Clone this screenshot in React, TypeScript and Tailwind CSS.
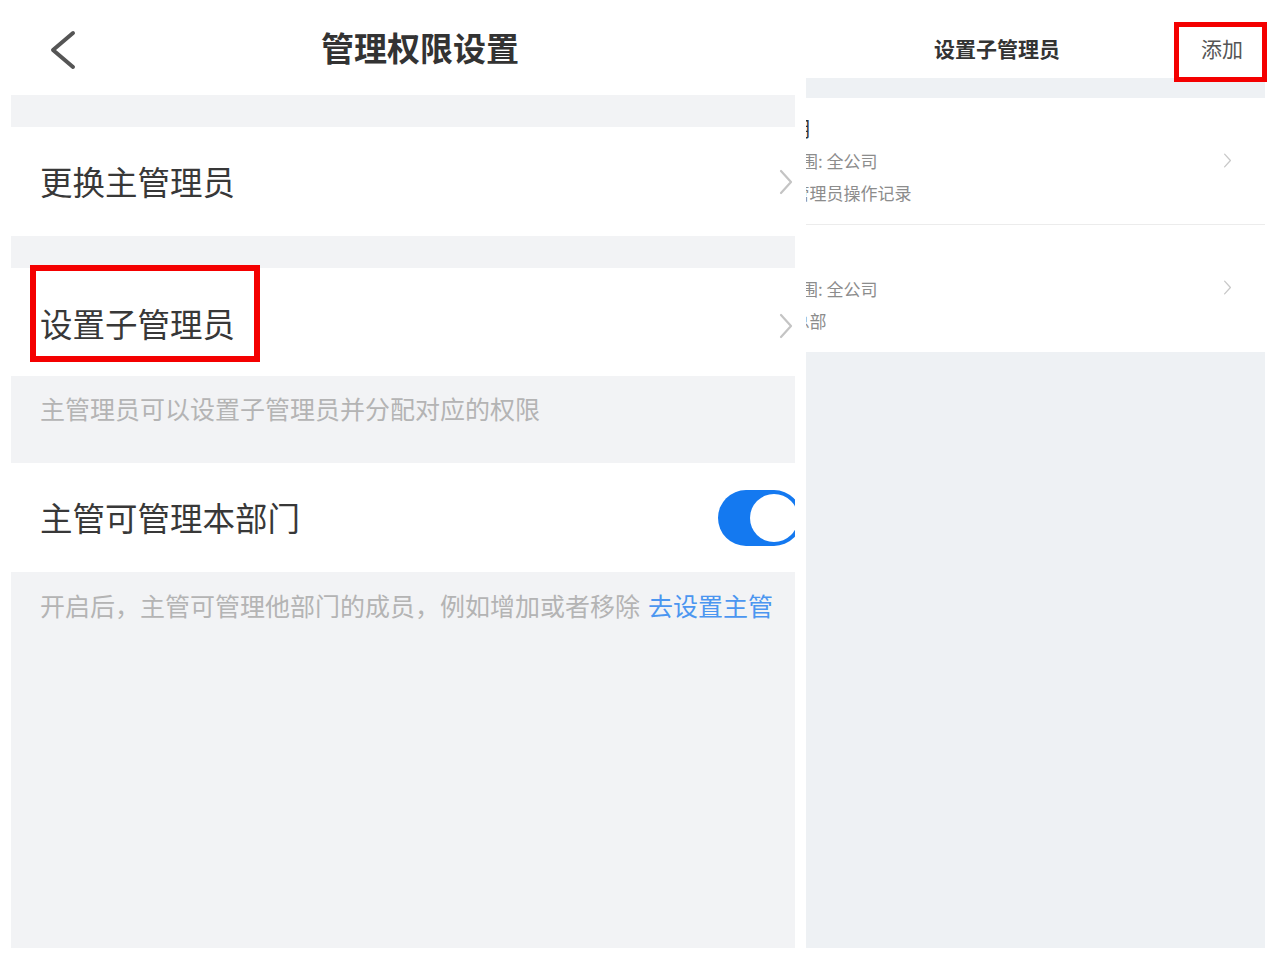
const cjk = "font-['Noto_Sans_CJK_SC','Noto_Sans',sans-serif]";

function Chevron({ className }: { className: string }) {
  return (
    <svg className={className} viewBox="0 0 14 26" fill="none">
      <polyline points="2,2 12,13 2,24" stroke="currentColor" strokeWidth={2.2} strokeLinecap="round" strokeLinejoin="round" />
    </svg>
  );
}

function LeftPanel() {
  return (
    <div className="h-[948px] w-[784px] shrink-0 overflow-hidden bg-[#f2f3f5]">
      <div className="w-[818px]">
        <div className="relative flex h-[95px] items-center justify-center bg-white">
          <svg className="absolute left-[39px] top-[30px] h-[40px] w-[26px]" viewBox="0 0 26 40" fill="none">
            <polyline points="23,3 3,20 23,37" stroke="#555" strokeWidth={4} strokeLinecap="round" strokeLinejoin="round" />
          </svg>
          <span className="text-[33px] font-bold text-[#333]">管理权限设置</span>
        </div>
        <div className="h-[32px]" />
        <div className="flex h-[109px] items-center justify-between bg-white pl-[29px] pr-[36px]">
          <span className="text-[32.5px] text-[#383838]">更换主管理员</span>
          <Chevron className="h-[26px] w-[14px] text-[#c4c4c4]" />
        </div>
        <div className="h-[32px]" />
        <div className="relative flex h-[108px] items-center justify-between bg-white pl-[29px] pr-[36px]">
          <span className="pt-[2px] text-[32.5px] text-[#383838]">设置子管理员</span>
          <Chevron className="mt-[8px] h-[26px] w-[14px] text-[#c4c4c4]" />
          <div className="absolute left-[19px] top-[-3px] h-[97px] w-[230px] border-[6px] border-[#f40000]" />
        </div>
        <div className="h-[87px] pl-[29px] pt-[15px] text-[25px] leading-[34px] text-[#b4b4b4]">
          主管理员可以设置子管理员并分配对应的权限
        </div>
        <div className="flex h-[109px] items-center justify-between bg-white pl-[29px] pr-[27px]">
          <span className="text-[32.5px] text-[#383838]">主管可管理本部门</span>
          <div className="flex h-[56px] w-[84px] items-center justify-end rounded-full bg-[#1479f0] pr-[4px]">
            <div className="h-[48px] w-[48px] rounded-full bg-white" />
          </div>
        </div>
        <div className="pl-[29px] pt-[16px] text-[25px] leading-[34px] text-[#b4b4b4]">
          开启后，主管可管理他部门的成员，例如增加或者移除
          <span className="ml-[8px] text-[#4b96f0]">去设置主管</span>
        </div>
      </div>
    </div>
  );
}

function AdminRow({ name, lines, border }: { name: string; lines: string[]; border: boolean }) {
  return (
    <div className={`flex h-[127px] items-center justify-between pl-[21px] pr-[33px] ${border ? "border-b border-[#ececec]" : ""}`}>
      <div className="flex flex-col">
        <span className="h-[30px] text-[20px] leading-[30px] text-[#333]">{name}</span>
        {lines.map((l) => (
          <span key={l} className="mt-[2px] h-[30px] text-[17px] leading-[30px] text-[#8c8c8c]">
            {l}
          </span>
        ))}
      </div>
      <Chevron className="mt-[-2px] h-[15px] w-[9px] text-[#c8c8c8]" />
    </div>
  );
}

function RightPanel() {
  return (
    <div className="relative h-[948px] w-[459px] shrink-0">
      <div className="h-full w-full overflow-hidden bg-[#eef1f4]">
        <div className="ml-[-77px] w-[536px]">
          <div className="flex h-[78px] items-center justify-center bg-white pt-[20px]">
            <span className="text-[21px] font-bold text-[#333]">设置子管理员</span>
          </div>
          <div className="h-[20px]" />
          <div className="bg-white">
            <AdminRow name="王晓明" lines={["管理范围: 全公司", "权限: 管理员操作记录"]} border />
            <AdminRow name="李" lines={["管理范围: 全公司", "权限: 总部"]} border={false} />
          </div>
        </div>
      </div>
      <div className="absolute right-[22px] top-[34px] text-[21px] leading-[28px] text-[#555]">添加</div>
      <div className="absolute right-[-2px] top-[22px] h-[60px] w-[93px] border-[5px] border-[#f40000]" />
    </div>
  );
}

export default function App() {
  return (
    <div className={`flex h-[960px] w-[1280px] gap-[11px] bg-white pl-[11px] ${cjk}`}>
      <LeftPanel />
      <RightPanel />
    </div>
  );
}
